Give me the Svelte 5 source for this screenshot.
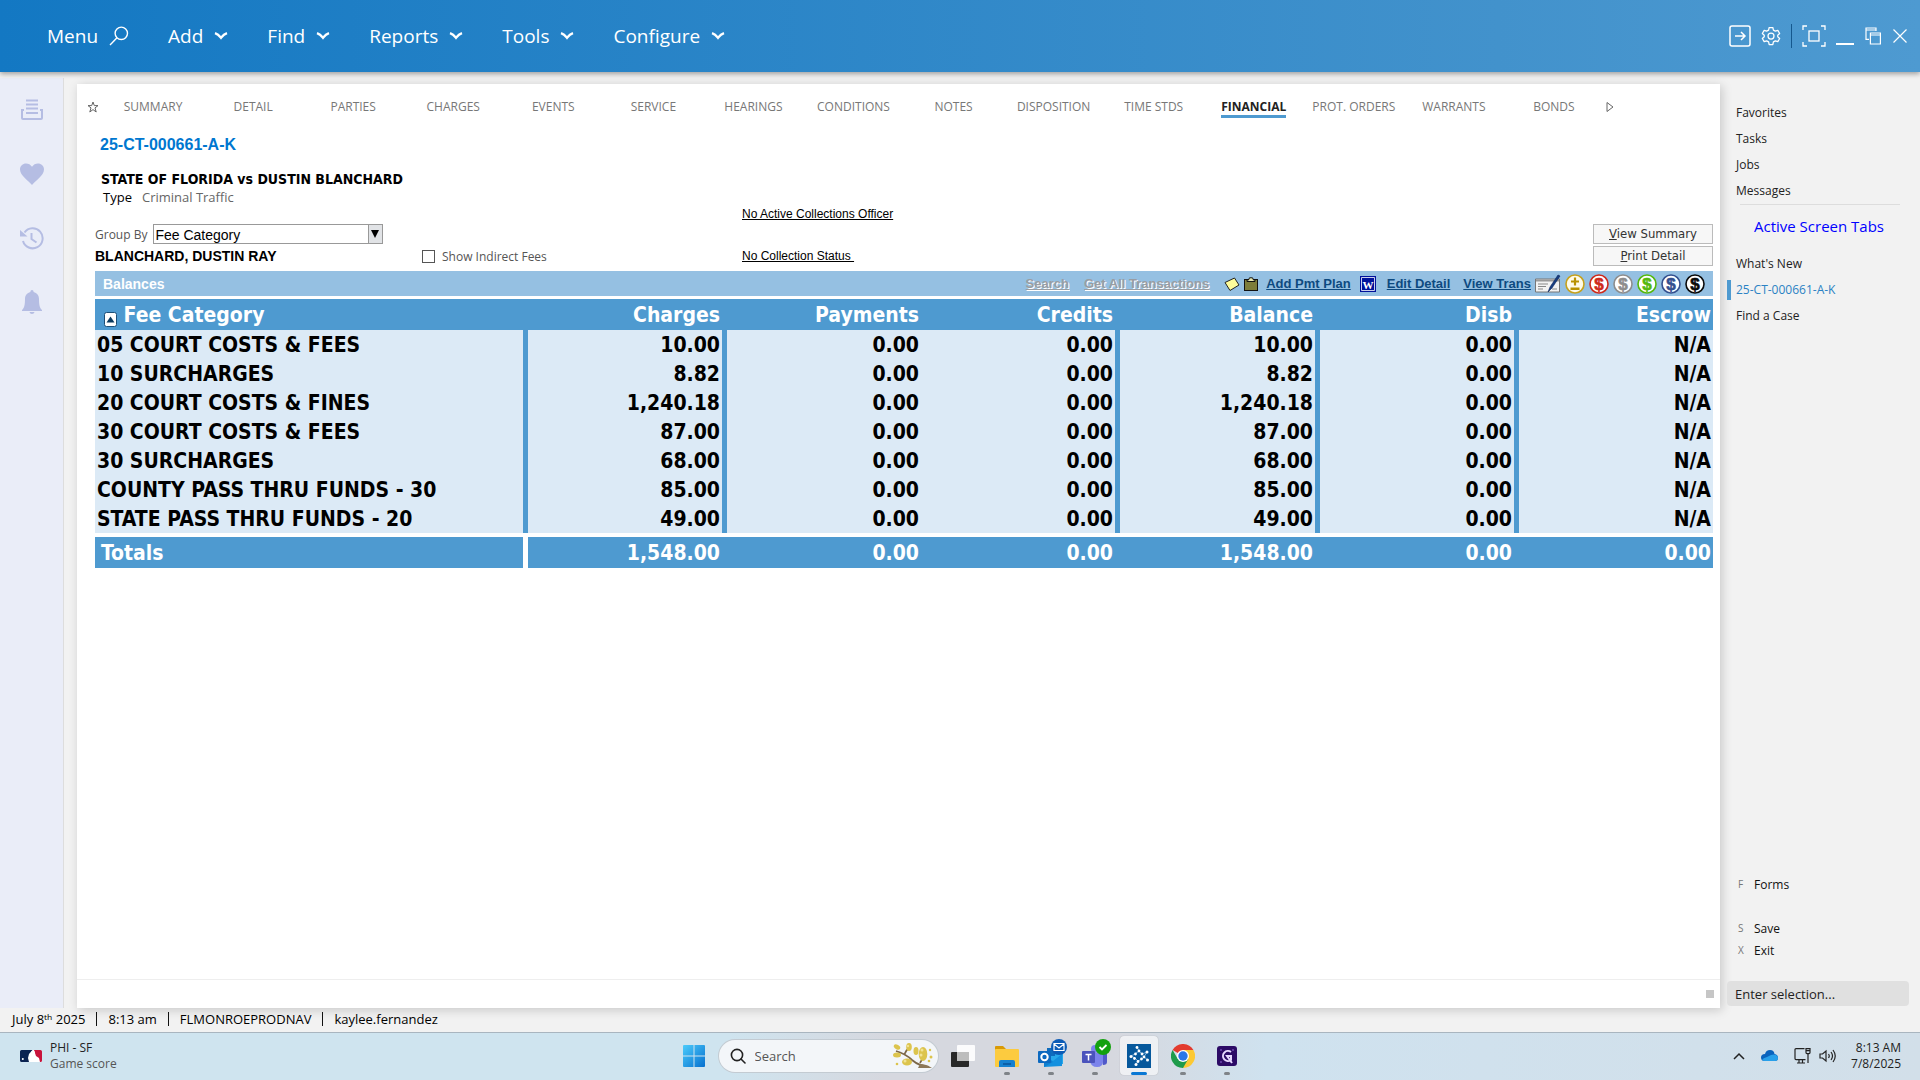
<script lang="ts">
  const menus = ['Add', 'Find', 'Reports', 'Tools', 'Configure'];

  const tabs = [
    'SUMMARY', 'DETAIL', 'PARTIES', 'CHARGES', 'EVENTS', 'SERVICE', 'HEARINGS', 'CONDITIONS',
    'NOTES', 'DISPOSITION', 'TIME STDS', 'FINANCIAL', 'PROT. ORDERS', 'WARRANTS', 'BONDS'
  ];
  let activeTab = $state('FINANCIAL');

  const columns = ['Charges', 'Payments', 'Credits', 'Balance', 'Disb', 'Escrow'];

  const fees = [
    { name: '05 COURT COSTS & FEES', amount: 10 },
    { name: '10 SURCHARGES', amount: 8.82 },
    { name: '20 COURT COSTS & FINES', amount: 1240.18 },
    { name: '30 COURT COSTS & FEES', amount: 87 },
    { name: '30 SURCHARGES', amount: 68 },
    { name: 'COUNTY PASS THRU FUNDS - 30', amount: 85 },
    { name: 'STATE PASS THRU FUNDS - 20', amount: 49 }
  ];
  const total = fees.reduce((sum, fee) => sum + fee.amount, 0);

  const coins = [
    { color: '#cf2a1b', label: 'Red fees' },
    { color: '#8d8d8d', label: 'Gray fees' },
    { color: '#55b80c', label: 'Green fees' },
    { color: '#33508f', label: 'Blue fees' },
    { color: '#0a0a0a', label: 'Black fees' }
  ];

  const shortcuts = ['Favorites', 'Tasks', 'Jobs', 'Messages'];
  const screens = ["What's New", '25-CT-000661-A-K', 'Find a Case'];

  let groupBy = $state('Fee Category');
  let showIndirect = $state(false);
  let selection = $state('');

  function money(value: number) {
    return value.toLocaleString('en-US', { minimumFractionDigits: 2, maximumFractionDigits: 2 });
  }
</script>

<div class="page">
  <header class="topbar">
    <nav class="menus">
      <button class="menu">
        Menu
        <svg width="20" height="20" viewBox="0 0 20 20" fill="none" stroke="#fff" stroke-width="1.4">
          <circle cx="12.3" cy="7.3" r="6.2" />
          <path d="M8 11.8 1 19" />
        </svg>
      </button>
      {#each menus as menu}
        <button class="menu">
          {menu}
          <svg width="14" height="8" viewBox="0 0 14 8" fill="none" stroke="#fff" stroke-width="2.4">
            <path d="M1 1.2c2 .7 4.500 2.800 6 4.600 1.500-1.800 4-3.900 6-4.600" />
          </svg>
        </button>
      {/each}
    </nav>
    <div class="window-tools">
      <button class="icon" aria-label="Go">
        <svg width="22" height="22" viewBox="0 0 22 22" fill="none" stroke="#fff" stroke-width="1.5">
          <rect x="1" y="1" width="20" height="20" rx="2" />
          <path d="M6 11h10M12 7l4 4-4 4" />
        </svg>
      </button>
      <button class="icon" aria-label="Settings">
        <svg width="20" height="20" viewBox="0 0 24 24" fill="none" stroke="#fff" stroke-width="1.500" stroke-linejoin="round">
          <circle cx="12" cy="12" r="3.600" />
          <path d="M9.800 1.800h4.400l.7 3.100 2.300 1.300 3-1 2.200 3.800-2.300 2.100v1.800l2.300 2.100-2.200 3.800-3-1-2.300 1.300-.7 3.100H9.800l-.7-3.100-2.300-1.300-3 1-2.200-3.800 2.300-2.100v-1.800L1.600 9l2.200-3.800 3 1 2.300-1.300z" />
        </svg>
      </button>
      <span class="divider"></span>
      <button class="icon" aria-label="Full screen">
        <svg width="24" height="22" viewBox="0 0 24 22" fill="none" stroke="#fff" stroke-width="1.300">
          <rect x="7" y="6" width="10" height="10" />
          <path d="M1 5V1h4M19 1h4v4M23 17v4h-4M5 21H1v-4" />
        </svg>
      </button>
      <button class="icon" aria-label="Minimize">
        <svg width="18" height="22" viewBox="0 0 18 22"><path d="M0 18h18v2H0z" fill="#fff" /></svg>
      </button>
      <button class="icon restore" aria-label="Restore">
        <svg width="16" height="18" viewBox="0 0 16 18" fill="none" stroke="#fff" stroke-width="1.200">
          <path d="M4 12.400H1V1h10v3M1 3h10M5.400 6h10v11h-10zM5.400 8h10" />
        </svg>
      </button>
      <button class="icon" aria-label="Close">
        <svg width="14" height="14" viewBox="0 0 14 14" stroke="#fff" stroke-width="1.200"><path d="m.500.500 13 13M13.500.500l-13 13" /></svg>
      </button>
    </div>
  </header>

  <div class="workspace">
    <aside class="rail">
      <button class="icon" aria-label="Inbox">
        <svg width="24" height="24" viewBox="0 0 24 24" fill="none" stroke="#b5bde3" stroke-width="2">
          <path d="M6 2.500h12M6 6.500h12M6 10.500h12M6 15h12" />
          <path d="M4 12H2v8q0 1 1 1h18q1 0 1-1v-8h-2" />
        </svg>
      </button>
      <button class="icon" aria-label="Favorites">
        <svg width="24" height="24" viewBox="0 0 24 24" fill="#b5bde3">
          <path d="M12 23C9 19 0 13.500 0 7.500 0 4 2.800 1.500 6 1.500c2.500 0 4.600 1.200 6 3.300 1.400-2.100 3.500-3.300 6-3.300 3.200 0 6 2.500 6 6C24 13.500 15 19 12 23z" />
        </svg>
      </button>
      <button class="icon" aria-label="History">
        <svg width="24" height="24" viewBox="0 0 24 24" fill="none" stroke="#b5bde3" stroke-width="2">
          <path d="M4.500 6.500A10 10 0 1 1 3 15" />
          <path d="M11.500 7v6l5 3.500" />
          <path d="M0 4v6.500h7.500z" fill="#b5bde3" stroke="none" />
        </svg>
      </button>
      <button class="icon" aria-label="Notifications">
        <svg width="24" height="24" viewBox="0 0 24 24" fill="#b5bde3">
          <path d="M12 0c1 0 1.600.800 1.600 2C17 2.800 19 5.500 19 9c0 6 .700 9 3 11v1H2v-1c2.300-2 3-5 3-11 0-3.500 2-6.200 5.400-7 0-1.200.600-2 1.600-2zM9.500 22h5c-.3 1.300-1.200 2-2.500 2s-2.200-.7-2.500-2z" />
        </svg>
      </button>
    </aside>

    <main class="panel">
      <nav class="tabs">
        <button class="icon star" aria-label="Add to favorites">
          <svg width="12" height="12" viewBox="0 0 12 12" fill="none" stroke="#666" stroke-width="1"><path d="m6 1 1.300 3.600h3.700L8 6.900 9.200 11 6 8.600 2.800 11 4 6.900 1 4.600h3.700z" /></svg>
        </button>
        {#each tabs as tab}
          <button class="tab" class:active={tab === activeTab} onclick={() => (activeTab = tab)}>
            <span>{tab}</span>
          </button>
        {/each}
        <button class="icon next" aria-label="More tabs">
          <svg width="8" height="12" viewBox="0 0 8 12" fill="none" stroke="#666" stroke-width="1"><path d="M1 1.500v9L7 6z" /></svg>
        </button>
      </nav>

      <section class="case">
        <a class="case-number" href="#case">25-CT-000661-A-K</a>
        <h1>STATE OF FLORIDA vs DUSTIN BLANCHARD</h1>
        <p class="case-type">Type <span>Criminal Traffic</span></p>

        <div class="filters">
          <a class="officer plain-link" href="#officer">No Active Collections Officer</a>
          <div class="group-by">
            <label for="group-by">Group By</label>
            <div class="select-box">
              <select id="group-by" bind:value={groupBy}>
                <option>Fee Category</option>
              </select>
              <svg width="14" height="18" viewBox="0 0 14 18"><path d="M0 0h14v18H0z" fill="#e1e3e6" /><path d="M0 0h1v18H0z" fill="#999" /><path d="M3 5h8l-4 8z" fill="#000" /></svg>
            </div>
          </div>
          <button class="action view-summary"><u>V</u>iew Summary</button>
          <strong class="party">BLANCHARD, DUSTIN RAY</strong>
          <label class="indirect"><input type="checkbox" bind:checked={showIndirect} />Show Indirect Fees</label>
          <a class="collection plain-link" href="#status">No Collection Status&nbsp;</a>
          <button class="action print-detail"><u>P</u>rint Detail</button>
        </div>

        <div class="balances">
          <h2>Balances</h2>
          <a class="disabled" href="#search">Search</a>
          <a class="disabled transactions" href="#transactions">Get All Transactions</a>
          <svg width="16" height="16" viewBox="0 0 16 16" stroke="#222" stroke-width="1"><path d="M1 6.500 10.500 2 15 9 6 14.500z" fill="#fffd9b" /></svg>
          <svg class="clipboard" width="14" height="14" viewBox="0 0 14 14"><rect x=".5" y="2.500" width="13" height="11" fill="#7d7d3a" stroke="#111" /><path d="M3 4.500h8V3H9.500L8.500.800h-3L4.500 3H3z" fill="#e8e8b0" stroke="#111" /></svg>
          <a class="plan" href="#plan">Add Pmt Plan</a>
          <svg class="word" width="16" height="16" viewBox="0 0 16 16"><path d="M0 0h16v16H0z" fill="#00129b" /><path d="M1.500 1.500h13v13h-13z" fill="none" stroke="#fff" stroke-width=".8" /><text x="8" y="12.500" text-anchor="middle" fill="#fff">W</text></svg>
          <a class="edit" href="#edit">Edit Detail</a>
          <a href="#trans">View Trans</a>
          <button class="icon check" aria-label="Write check">
            <svg width="26" height="20" viewBox="0 0 26 20">
              <path d="M.5 5h24v13H.5z" fill="#f2f2f2" stroke="#777" />
              <path d="M1 5.500h23v2H1z" fill="#999" />
              <path d="M3 10h10M3 12.500h8M3 15h5M17 15h5" stroke="#888" />
              <path d="m13 18 2-5L23 1l2 1-8 12z" fill="#173d80" stroke="#0c2457" stroke-width=".6" />
            </svg>
          </button>
          <div class="coins">
            <button class="icon" aria-label="Adjust">
              <svg width="20" height="20" viewBox="0 0 20 20"><circle cx="10" cy="10" r="9" fill="#fffbe8" stroke="#c6a11c" stroke-width="1.600" /><path d="M10 3.500v8M6 7.500h8" stroke="#b99200" stroke-width="2.200" /><path d="M5.500 13.500h9v2.500h-9z" fill="#b99200" /></svg>
            </button>
            {#each coins as coin}
              <button class="icon" aria-label={coin.label}>
                <svg width="20" height="20" viewBox="0 0 20 20">
                  <circle cx="10" cy="10" r="9" fill="#fff" stroke={coin.color} stroke-width="1.600" />
                  <text x="10" y="16" text-anchor="middle" fill={coin.color} stroke={coin.color}>$</text>
                </svg>
              </button>
            {/each}
          </div>
        </div>

        <table>
          <colgroup>
            <col class="c-name" /><col class="c-charges" /><col class="c-payments" /><col class="c-credits" />
            <col class="c-balance" /><col class="c-disb" /><col class="c-escrow" />
          </colgroup>
          <thead>
            <tr>
              <th>
                <svg width="13" height="15" viewBox="0 0 13 15"><rect x=".5" y=".5" width="12" height="14" rx="2" fill="#fff" stroke="#1b4f78" /><path d="M2.500 10.500h8l-4-6z" fill="#0b3a5f" /></svg>
                Fee Category
              </th>
              {#each columns as column}
                <th>{column}</th>
              {/each}
            </tr>
          </thead>
          <tbody>
            {#each fees as fee}
              <tr>
                <td>{fee.name}</td>
                <td>{money(fee.amount)}</td>
                <td>0.00</td>
                <td>0.00</td>
                <td>{money(fee.amount)}</td>
                <td>0.00</td>
                <td>N/A</td>
              </tr>
            {/each}
          </tbody>
          <tfoot>
            <tr>
              <td>Totals</td>
              <td>{money(total)}</td>
              <td>0.00</td>
              <td>0.00</td>
              <td>{money(total)}</td>
              <td>0.00</td>
              <td>0.00</td>
            </tr>
          </tfoot>
        </table>
      </section>

      <footer class="panel-foot"><span class="grip"></span></footer>
    </main>

    <aside class="side">
      <nav class="side-links">
        {#each shortcuts as item}
          <a href="#shortcut">{item}</a>
        {/each}
      </nav>
      <h3>Active Screen Tabs</h3>
      <nav class="side-links">
        {#each screens as item, i}
          <a href="#screen" class:current={i === 1}>{item}</a>
        {/each}
      </nav>
      <div class="commands">
        <button class="forms"><kbd>F</kbd>Forms</button>
        <button><kbd>S</kbd>Save</button>
        <button><kbd>X</kbd>Exit</button>
      </div>
      <input class="selection" aria-label="Selection" placeholder="Enter selection..." bind:value={selection} />
    </aside>
  </div>

  <div class="statusbar">
    <span>July 8ᵗʰ 2025</span><i></i><span>8:13 am</span><i></i><span>FLMONROEPRODNAV</span><i></i><span>kaylee.fernandez</span>
  </div>

  <footer class="taskbar">
    <button class="widget">
      <svg width="22" height="12" viewBox="0 0 22 12">
        <rect width="22" height="12" rx="1.500" fill="#fff" />
        <path d="M1.500 0h11L9 4 8 8l1 4H1.500Q0 12 0 10.500v-9Q0 0 1.500 0z" fill="#0a2351" />
        <path d="M14 0h6.500Q22 0 22 1.500v9q0 1.500-1.500 1.500H20l-1-4-3-2z" fill="#c8133b" />
        <circle cx="13" cy="2.800" r="2" fill="#fff" />
        <circle cx="2.800" cy="9" r="1" fill="#fff" />
      </svg>
      <span>PHI - SF<small>Game score</small></span>
    </button>

    <div class="apps">
      <button class="app" aria-label="Start">
        <svg width="24" height="24" viewBox="0 0 24 24">
          <defs>
            <linearGradient id="win" x1="0" y1="0" x2="1" y2="1"><stop offset="0" stop-color="#4ccbfb" /><stop offset="1" stop-color="#0670cf" /></linearGradient>
          </defs>
          <path d="M2 1h9.500v10.500H1V2q0-1 1-1zM12.500 1H22q1 0 1 1v9.500H12.500zM1 12.500h10.500V23H2q-1 0-1-1zM12.500 12.500H23V22q0 1-1 1h-9.500z" fill="url(#win)" />
        </svg>
      </button>
      <label class="search">
        <svg width="16" height="16" viewBox="0 0 16 16" fill="none" stroke="#222" stroke-width="1.600" stroke-linecap="round"><circle cx="7" cy="7" r="5.600" /><path d="m11 11 4 4" /></svg>
        <input type="search" aria-label="Search" placeholder="Search" />
        <svg width="42" height="26" viewBox="0 0 42 26">
          <path d="M4 8q10 3 16 9 7 6 17 7M12 12q2-5 5-7M28 20q4-6 3-12" fill="none" stroke="#7d6849" stroke-width="1.800" />
          <path d="M28 21q6 0 12 4H26z" fill="#8d7858" />
          <g fill="#dcc44d">
            <ellipse cx="5" cy="4" rx="3.500" ry="2.200" transform="rotate(30 5 4)" /><ellipse cx="5" cy="12" rx="4" ry="2.500" />
            <ellipse cx="17" cy="4" rx="2.800" ry="4" /><ellipse cx="15" cy="19" rx="5" ry="3.500" />
            <ellipse cx="24" cy="8" rx="2.500" ry="4" /><ellipse cx="31" cy="11" rx="4.300" ry="7" />
            <circle cx="38" cy="7" r="1.200" /><circle cx="39" cy="14" r="1.500" /><circle cx="5" cy="21" r="1.300" /><circle cx="37" cy="18" r="1.300" />
          </g>
          <g fill="#f1e394"><circle cx="30" cy="7" r="1.500" /><circle cx="29" cy="12" r="1.500" /><circle cx="16" cy="3" r="1.200" /><circle cx="13" cy="18" r="1.500" /></g>
        </svg>
      </label>
      <button class="app" aria-label="Task view">
        <svg width="24" height="24" viewBox="0 0 24 24"><rect x="0" y="8" width="18" height="15" rx="1" fill="#282828" /><rect x="6" y="1" width="18" height="16" rx="1" fill="#fff" fill-opacity=".9" /><path d="M6 8h12v9H6z" fill="#bdbdbd" /></svg>
      </button>
      <button class="app running" aria-label="File Explorer">
        <svg width="24" height="24" viewBox="0 0 24 24"><path d="M1 2h7l3 3v5H0V3q0-1 1-1z" fill="#d99a06" /><path d="M1 5h22q1 0 1 1v16q0 1-1 1H1q-1 0-1-1V6q0-1 1-1z" fill="#fccb3f" /><path d="M6 16h12q2 0 2 2v5H4v-5q0-2 2-2z" fill="#1681d0" /><path d="M8 19h8v2H8z" fill="#0b5fa8" /></svg>
      </button>
      <button class="app running badged" aria-label="Outlook">
        <svg width="32" height="30" viewBox="0 0 32 30">
          <path d="M10 9h16v16H10z" fill="#28a8ea" /><path d="M10 9h8v8h-8z" fill="#0f6cbd" /><path d="m7 28 18-1V15l-9 7-9-5z" fill="#1490df" /><path d="m7 17 9 6-9 5z" fill="#0f7fd0" />
          <rect x="1" y="12" width="13" height="12" rx="1" fill="#0c69c0" /><circle cx="7.500" cy="18" r="3.200" fill="none" stroke="#fff" stroke-width="2" />
          <circle cx="22" cy="8" r="8" fill="#0d5cb6" /><path d="M17 4.500h10v7H17zM17 5l5 4 5-4" fill="none" stroke="#fff" stroke-width="1.200" />
        </svg>
      </button>
      <button class="app running badged" aria-label="Teams">
        <svg width="32" height="30" viewBox="0 0 32 30">
          <path d="M20 14h6v9q0 3-4 3z" fill="#5059c9" /><circle cx="14" cy="10" r="4" fill="#7b83eb" /><path d="M9 14h13v8q0 6-6 6t-7-6z" fill="#7b83eb" />
          <rect x="1" y="12" width="13" height="12" rx="1" fill="#4b53bc" /><path d="M4.500 15.500h6M7.500 15.500v6" stroke="#fff" stroke-width="1.500" />
          <circle cx="22" cy="8" r="8" fill="#13a10e" /><path d="m18.500 8 2.500 2.500 4.500-4.500" fill="none" stroke="#fff" stroke-width="1.800" />
        </svg>
      </button>
      <button class="app selected" aria-label="Court records">
        <svg width="24" height="24" viewBox="0 0 24 24">
          <path d="M0 0h24v24H0z" fill="#06589c" />
          <path d="m10 3 2 4 3 3 5-2-3 5 4 3M12 7l-4 3-4 2 4 2 3 3 4-2 2-2M11 17l-2 4" stroke="#8fc0e6" stroke-width=".8" fill="none" />
          <g fill="#fff"><circle cx="10" cy="3.500" r="1.400" /><circle cx="12" cy="7" r="1.400" /><circle cx="15" cy="10" r="1.400" /><circle cx="20" cy="8" r="1.500" /><circle cx="17" cy="13" r="1.400" /><circle cx="20.500" cy="16" r="1.500" /><circle cx="14.500" cy="15" r="1.400" /><circle cx="11" cy="17.500" r="1.400" /><circle cx="9" cy="20.500" r="1.500" /><circle cx="7.500" cy="14.500" r="1.400" /><circle cx="4" cy="12.500" r="1.500" /><circle cx="8.500" cy="10" r="1.400" /></g>
        </svg>
      </button>
      <button class="app running" aria-label="Chrome">
        <svg width="24" height="24" viewBox="0 0 24 24"><path d="M12 12 1.600 6A12 12 0 0 1 22.400 6z" fill="#e33b2e" /><path d="M12 12V6h10.400A12 12 0 0 1 12 24z" fill="#fcc934" /><path d="m12 12 5.200 3L12 24A12 12 0 0 1 1.600 6l5.200 9z" fill="#1e9b4b" /><circle cx="12" cy="12" r="6" fill="#fff" /><circle cx="12" cy="12" r="4.700" fill="#2a77e8" /></svg>
      </button>
      <button class="app running" aria-label="Assistant">
        <svg width="20" height="20" viewBox="0 0 20 20"><rect width="20" height="20" rx="3" fill="#2c0b66" /><path d="M14 6a5 5 0 1 0 0 8v-4h-4l5 7" fill="none" stroke="#e7d9ff" stroke-width="2" /><g fill="#b48cff"><circle cx="4" cy="4" r=".7" /><circle cx="16" cy="4" r=".7" /><circle cx="4" cy="16" r=".7" /></g></svg>
      </button>
    </div>

    <div class="tray">
      <svg width="12" height="8" viewBox="0 0 12 8" fill="none" stroke="#222" stroke-width="1.500"><path d="m1 7 5-5 5 5" /></svg>
      <svg width="17" height="12" viewBox="0 0 17 12"><path d="M4 11Q0 11 0 7.500 0 4 4 4q1-4 5-4 4 0 4.500 4Q17 4.500 17 8q0 3-3 3z" fill="#0a63bd" /><path d="M1 10q1-2 5-3l4-2q3-1 5 0 2 1 2 3 0 3-3 3H4q-2 0-3-1z" fill="#28a0ea" /></svg>
      <svg width="17" height="17" viewBox="0 0 17 17" fill="none" stroke="#222" stroke-width="1.200"><path d="M10.500 1.600H2q-1 0-1 1v9q0 1 1 1h9.500M5 12.600v3M8.500 12.600v3M3 16h8M12 1.600h4v4q0 1-1 1h-2q-1 0-1-1zM14 7v9M12 3.600h4" /></svg>
      <svg width="17" height="14" viewBox="0 0 17 14" fill="none" stroke="#222" stroke-width="1.200"><path d="M1 5h2.500L7 2v10L3.500 9H1zM9.500 5q1.500 2 0 4M12 3q3 4 0 8M14 1q4.500 6 0 12" /></svg>
      <time>8:13 AM<br />7/8/2025</time>
    </div>
  </footer>
</div>

<style>
  :global(body) {
    margin: 0;
  }

  .page {
    min-height: 100vh;
    display: flex;
    flex-direction: column;
    background: #f2f2f2;
    font-family: 'Open Sans', 'Noto Sans', sans-serif;
    font-size: 12px;
    color: #222;
  }

  button {
    font: inherit;
    color: inherit;
    background: none;
    border: 0;
    padding: 0;
  }

  a {
    color: inherit;
    text-decoration: none;
  }

  svg {
    display: block;
    flex-shrink: 0;
  }

  .icon {
    display: flex;
    align-items: center;
    justify-content: center;
  }

  .topbar {
    height: 72px;
    display: flex;
    align-items: center;
    justify-content: space-between;
    padding: 0 13px 0 47px;
    box-sizing: border-box;
    background: linear-gradient(90deg, #1378c3, #4292cc 78%, #4e9ad1);
    box-shadow: 0 2px 5px rgba(0, 0, 0, 0.35);
    z-index: 1;
  }

  .menus {
    display: flex;
    gap: 39px;
  }

  .menu {
    display: flex;
    align-items: center;
    gap: 11px;
    color: #fff;
    font-size: 19px;
    line-height: 28px;
  }

  .window-tools {
    display: flex;
    align-items: center;
    gap: 10px;
  }

  .divider {
    width: 1px;
    height: 24px;
    background: #15588e;
  }

  .restore {
    padding: 0 2px 0 1px;
  }

  .workspace {
    flex: 1;
    display: flex;
  }

  .rail {
    width: 64px;
    margin-top: 6px;
    padding-top: 20px;
    display: flex;
    flex-direction: column;
    align-items: center;
    gap: 40px;
    background: #eaedf8;
    border-right: 1px solid #ddd;
    box-sizing: border-box;
  }

  .panel {
    flex: 1;
    margin: 12px 0 0 13px;
    display: flex;
    flex-direction: column;
    background: #fff;
    box-shadow: 2px 2px 10px rgba(0, 0, 0, 0.18);
  }

  .tabs {
    display: grid;
    grid-template-columns: 26px repeat(15, 1fr) 116px;
    height: 46px;
    align-items: center;
  }

  .star {
    padding-left: 6px;
  }

  .next {
    justify-content: flex-start;
    padding-left: 2px;
  }

  .tab {
    color: #777;
    line-height: 16px;
    white-space: nowrap;
  }

  .tab span {
    display: inline-block;
    border-bottom: 3px solid transparent;
    border-top: 3px solid transparent;
  }

  .tab.active {
    color: #222;
    font-weight: 700;
  }

  .tab.active span {
    border-bottom-color: #4e9ad0;
  }

  .case {
    flex: 1;
    padding: 0 7px 0 18px;
    font-family: 'Liberation Sans', Arial, sans-serif;
  }

  .case-number {
    display: block;
    padding-left: 5px;
    font-size: 16px;
    font-weight: 700;
    line-height: 30px;
    color: #0077d0;
  }

  h1 {
    margin: 10px 0 0;
    padding-left: 6px;
    font-family: 'DejaVu Sans Condensed', Tahoma, sans-serif;
    font-size: 14px;
    line-height: 18px;
    color: #000;
  }

  .case-type {
    margin: 0;
    padding-left: 8px;
    display: flex;
    gap: 10px;
    font-family: 'Open Sans', sans-serif;
    font-size: 13px;
    line-height: 18px;
    color: #000;
  }

  .case-type span {
    color: #666;
  }

  .filters {
    display: grid;
    grid-template-columns: 327px 320px 1fr 120px;
    grid-template-rows: 16px 20px 20px;
    align-items: center;
    row-gap: 2px;
    margin-bottom: 5px;
  }

  .officer {
    grid-area: 1 / 3;
  }

  .plain-link {
    justify-self: start;
    font-size: 12px;
    line-height: 14px;
    color: #000;
    text-decoration: underline;
  }

  .group-by {
    grid-area: 2 / 1;
    display: flex;
    align-items: center;
    gap: 6px;
    font-family: 'Open Sans', sans-serif;
    color: #555;
  }

  .select-box {
    display: flex;
    width: 230px;
    height: 20px;
    box-sizing: border-box;
    border: 1px solid #999;
    background: #fff;
  }

  select {
    flex: 1;
    min-width: 0;
    appearance: none;
    border: 0;
    padding: 1px 0 0 1px;
    background: none;
    font: 14px 'Liberation Sans', Arial, sans-serif;
    color: #000;
  }

  .action {
    height: 20px;
    border: 1px solid #bbb;
    background: #f7f7f7;
    font: 13px 'DejaVu Sans Condensed', Tahoma, sans-serif;
    line-height: 16px;
    color: #333;
  }

  .view-summary {
    grid-area: 2 / 4;
  }

  .print-detail {
    grid-area: 3 / 4;
  }

  .party {
    grid-area: 3 / 1;
    font-size: 14px;
    color: #000;
  }

  .collection {
    grid-area: 3 / 3;
  }

  .indirect {
    grid-area: 3 / 2;
    display: flex;
    align-items: center;
    gap: 7px;
    font-family: 'Open Sans', sans-serif;
    color: #555;
  }

  .indirect input {
    appearance: none;
    box-sizing: border-box;
    width: 13px;
    height: 13px;
    margin: 0;
    border: 1px solid #555;
    background: #fff;
  }

  .indirect input:checked {
    background: #4e9ad0;
  }

  .balances {
    height: 25px;
    display: flex;
    align-items: center;
    padding: 0 8px;
    background: #95c0e2;
    font-size: 13px;
    font-weight: 700;
    margin-bottom: 3px;
  }

  .balances h2 {
    flex: 1;
    margin: 0;
    font-size: 14px;
    color: #fff;
  }

  .balances a {
    color: #0d4a80;
    text-decoration: underline;
    white-space: nowrap;
  }

  .balances .disabled {
    color: #999da3;
    text-shadow: 1px 1px 0 #fff;
  }

  .transactions {
    margin: 0 15px;
  }

  .clipboard {
    margin-left: 4px;
  }

  .plan {
    margin: 0 9px 0 8px;
  }

  .word text {
    font: 700 11px 'Liberation Serif', serif;
  }

  .edit {
    margin: 0 13px 0 11px;
  }

  .check {
    margin: 0 4px;
  }

  .coins {
    display: flex;
    gap: 4px;
  }

  .coins text {
    font: 700 17px 'Liberation Sans', Arial, sans-serif;
    stroke-width: 0.6px;
  }

  table {
    width: 100%;
    table-layout: fixed;
    border-spacing: 0;
    font-family: 'DejaVu Sans Condensed', Tahoma, sans-serif;
    font-size: 21px;
    font-weight: 700;
    color: #000;
  }

  .c-name { width: 433px; }
  .c-charges { width: 199px; }
  .c-payments { width: 194px; }
  .c-credits { width: 199px; }
  .c-balance { width: 200px; }
  .c-disb { width: 199px; }
  .c-escrow { width: 194px; }

  th,
  td {
    padding: 2px 2px 0;
    height: 27px;
    line-height: 27px;
    text-align: right;
    white-space: nowrap;
    border-right: 5px solid #4e9ad0;
  }

  td {
    background: #dceaf6;
  }

  th:first-child,
  td:first-child {
    text-align: left;
  }

  th:nth-child(3),
  td:nth-child(3),
  th:last-child,
  td:last-child {
    border-right: 0;
  }

  th,
  tfoot td {
    height: 29px;
    line-height: 29px;
    background: #4e9ad0;
    color: #fff;
  }

  th:first-child {
    padding-left: 9px;
  }

  th svg {
    display: inline-block;
    vertical-align: -5px;
  }

  tfoot td {
    border-top: 4px solid #fff;
    border-right: 0;
    padding-right: 7px;
  }

  tfoot td:nth-child(3),
  tfoot td:last-child {
    padding-right: 2px;
  }

  tfoot td:first-child {
    padding-left: 6px;
    border-right: 5px solid #fff;
  }

  .panel-foot {
    height: 28px;
    border-top: 1px solid #eee;
    display: flex;
    align-items: center;
    justify-content: flex-end;
    padding-right: 6px;
  }

  .grip {
    width: 8px;
    height: 8px;
    background: #c6c6c6;
  }

  .side {
    width: 200px;
    box-sizing: border-box;
    padding: 31px 11px 2px 7px;
    display: flex;
    flex-direction: column;
  }

  .side-links {
    display: flex;
    flex-direction: column;
    gap: 6px;
  }

  .side-links a {
    padding-left: 5px;
    line-height: 20px;
    border-left: 4px solid transparent;
  }

  .side-links .current {
    border-left-color: #4e9ad0;
    color: #2b82c4;
  }

  h3 {
    margin: 3px 9px 0 13px;
    padding: 9px 14px 15px;
    border-top: 1px solid #ddd;
    font-size: 15px;
    font-weight: 400;
    line-height: 25px;
    color: #00f;
    white-space: nowrap;
  }

  .commands {
    margin-top: auto;
    display: flex;
    flex-direction: column;
    color: #111;
  }

  .commands button {
    display: flex;
    align-items: center;
    padding-left: 11px;
    height: 22px;
  }

  .commands .forms {
    margin-bottom: 22px;
  }

  kbd {
    width: 16px;
    text-align: left;
    font: 10px 'Open Sans', sans-serif;
    color: #777;
  }

  .selection {
    height: 25px;
    margin-top: 20px;
    box-sizing: border-box;
    padding: 0 8px;
    border: 0;
    border-radius: 4px;
    background: #e0e0e0;
    font: 13px 'Open Sans', sans-serif;
  }

  .selection::placeholder {
    color: #222;
    opacity: 1;
  }

  .statusbar {
    height: 24px;
    box-sizing: border-box;
    display: flex;
    align-items: center;
    gap: 11px;
    padding: 0 12px 2px;
    font-size: 13px;
    line-height: 22px;
    color: #000;
  }

  .statusbar i {
    width: 1px;
    height: 14px;
    background: #111;
  }

  .taskbar {
    height: 48px;
    box-sizing: border-box;
    border-top: 1px solid #a9b5bf;
    padding-bottom: 2px;
    display: grid;
    grid-template-columns: 1fr auto 1fr;
    align-items: center;
    background: linear-gradient(90deg, #cfe4ef 38%, #d6d8df 46%, #d6d8df 58%, #cfe2ef 66%, #d2dfe9);
  }

  .widget {
    display: flex;
    align-items: center;
    gap: 8px;
    padding-left: 20px;
    text-align: left;
    line-height: 16px;
  }

  .widget small {
    display: block;
    font-size: 12px;
    color: #555;
  }

  .apps {
    display: flex;
    align-items: center;
  }

  .app {
    width: 44px;
    height: 45px;
    display: flex;
    align-items: center;
    justify-content: center;
    position: relative;
  }

  .badged {
    padding: 0 0 4px 4px;
    box-sizing: border-box;
  }

  .app.running::after,
  .app.selected::after {
    content: '';
    position: absolute;
    left: 19px;
    bottom: 3px;
    width: 6px;
    height: 3px;
    border-radius: 2px;
    background: #7f8388;
  }

  .app.selected::before {
    content: '';
    position: absolute;
    inset: 3px;
    border-radius: 4px;
    background: rgba(255, 255, 255, 0.6);
    box-shadow: 0 0 1px #999;
  }

  .app.selected svg {
    position: relative;
  }

  .app.selected::after {
    left: 14px;
    width: 16px;
    background: #0a78d4;
  }

  .search {
    width: 219px;
    height: 32px;
    margin: 0 3px;
    padding: 0 4px 0 11px;
    box-sizing: border-box;
    display: flex;
    align-items: center;
    border-radius: 16px;
    background: #f3f6f9;
    box-shadow: 0 0 0 1px #c3cbd2;
  }

  .search input {
    flex: 1;
    min-width: 0;
    border: 0;
    padding: 0 0 0 9px;
    background: none;
    font: 13px 'Open Sans', sans-serif;
  }

  .search input::placeholder {
    color: #555;
    opacity: 1;
  }

  .tray {
    justify-self: end;
    display: flex;
    align-items: center;
    gap: 8px;
    padding-right: 19px;
  }

  .tray svg:nth-child(1),
  .tray svg:nth-child(2) {
    margin-right: 8px;
  }

  time {
    margin-left: 7px;
    line-height: 16px;
    text-align: right;
  }
</style>
